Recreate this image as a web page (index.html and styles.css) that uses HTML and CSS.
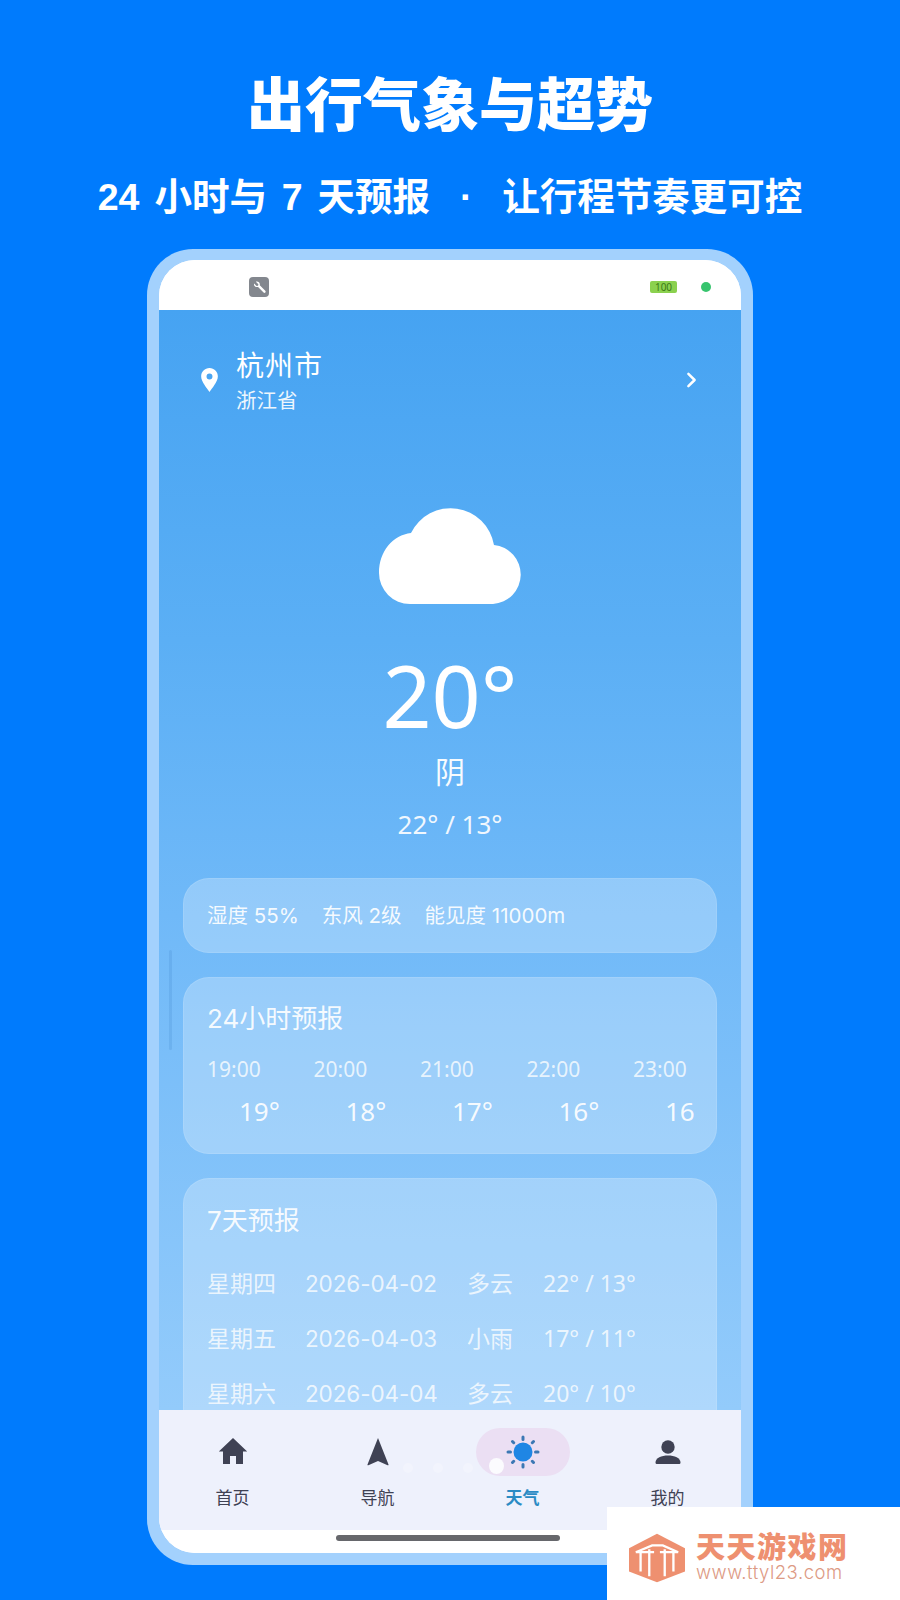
FILE: index.html
```html
<!DOCTYPE html>
<html lang="zh-CN">
<head>
<meta charset="utf-8">
<title>出行气象与超势</title>
<link rel="stylesheet" href="styles.css">
</head>
<body>
<main class="page">
  <h1 class="headline">出行气象与超势</h1>
  <p class="subline">24 小时与 7 天预报  ·  让行程节奏更可控</p>
  <section class="phone">
    <div class="screen">
      <header class="status">
        <span class="tool"><svg viewBox="0 0 20 20" width="17" height="17"><path d="M3.600 5.200 6.600 8.200l1.700-.4.400-1.700-3-3c2.600-.8 5 1.100 4.700 3.700l-.1.600 6.500 6.500c.6.600.6 1.400 0 2-.6.600-1.400.6-2 0L8.300 9.400l-.7.100C5 9.800 2.900 7.700 3.600 5.200z" fill="#fff"/></svg></span>
        <span class="status-right"><span class="battery">100</span><span class="live-dot"></span></span>
      </header>
      <div class="content">
        <div class="location">
          <svg class="pin" viewBox="0 0 20 28" width="19" height="26"><path fill-rule="evenodd" d="M10 1C5 1 1 5 1 10c0 6 6.500 13 9 17 2.500-4 9-11 9-17 0-5-4-9-9-9zm0 6a3.200 3.200 0 1 1 0 6.400A3.200 3.200 0 0 1 10 7z" fill="#fff"/></svg>
          <div class="place"><div class="city">杭州市</div><div class="province">浙江省</div></div>
          <svg class="chevron" viewBox="0 0 12 18" width="11" height="16"><path d="M2.500 2l7 7-7 7" fill="none" stroke="#fff" stroke-width="2.800" stroke-linecap="round" stroke-linejoin="round"/></svg>
        </div>
        <div class="hero">
          <svg class="cloud" viewBox="0 0 143 96" width="143" height="96"><path d="M31 96A31 31 0 0 1 0 65C0 43 14 27 32 25A44 44 0 0 1 115 37 29.600 29.600 0 0 1 114 96z" fill="#fff"/></svg>
          <div class="temp">20°</div>
          <div class="cond">阴</div>
          <div class="range">22° / 13°</div>
        </div>
        <div class="card card-meta"><span>湿度 55%</span><span>东风 2级</span><span>能见度 11000m</span></div>
        <div class="card card-hours">
          <div class="card-title">24小时预报</div>
          <div class="hours">
            <div class="hour"><span class="h-time">19:00</span><span class="h-temp">19°</span></div>
            <div class="hour"><span class="h-time">20:00</span><span class="h-temp">18°</span></div>
            <div class="hour"><span class="h-time">21:00</span><span class="h-temp">17°</span></div>
            <div class="hour"><span class="h-time">22:00</span><span class="h-temp">16°</span></div>
            <div class="hour"><span class="h-time">23:00</span><span class="h-temp">16</span></div>
          </div>
        </div>
        <div class="card card-days">
          <div class="card-title">7天预报</div>
          <div class="day"><span class="d-week">星期四</span><span class="d-date">2026-04-02</span><span class="d-cond">多云</span><span>22° / 13°</span></div>
          <div class="day"><span class="d-week">星期五</span><span class="d-date">2026-04-03</span><span class="d-cond">小雨</span><span>17° / 11°</span></div>
          <div class="day"><span class="d-week">星期六</span><span class="d-date">2026-04-04</span><span class="d-cond">多云</span><span>20° / 10°</span></div>
        </div>
        <span class="scroll-hint"></span>
      </div>
      <nav class="tabs">
        <div class="tab">
          <span class="tab-icon"><svg viewBox="0 0 30 30" width="30" height="30"><path d="M15 1 .8 14.500H5V27h7v-8h6v8h7V14.500h4.200z" fill="#3f4254"/></svg></span>
          <span class="tab-label">首页</span>
        </div>
        <div class="tab">
          <span class="tab-icon"><svg viewBox="0 0 24 30" width="24" height="30"><path d="M12 1 22.500 27.500c.2.700-.3 1-.9.800L12 24 2.400 28.300c-.6.200-1.100-.1-.9-.8z" fill="#3f4254"/></svg></span>
          <span class="tab-label">导航</span>
        </div>
        <div class="tab tab-on">
          <span class="tab-icon"><span class="pill"></span><svg class="sun" viewBox="0 0 40 40" width="40" height="40"><circle cx="20" cy="20" r="9.500" fill="#1f86e4"/><g stroke="#3c78b4" stroke-width="3" stroke-linecap="round"><path d="M20 5v2.500M20 32.500V35M5 20h2.500M32.500 20H35M9.500 9.500l1.200 1.200M29.300 29.300l1.200 1.200M9.500 30.500l1.200-1.200M29.300 10.700l1.200-1.200"/></g></svg><span class="pill-dot"></span></span>
          <span class="tab-label">天气</span>
        </div>
        <div class="tab">
          <span class="tab-icon"><svg viewBox="0 0 30 30" width="30" height="30"><circle cx="15" cy="10" r="6.700" fill="#3f4254"/><path d="M2.500 25.500c0-4.500 6-7 12.500-7s12.500 2.500 12.500 7c0 1-.7 1.500-1.500 1.500H4c-.8 0-1.500-.5-1.500-1.500z" fill="#3f4254"/></svg></span>
          <span class="tab-label">我的</span>
        </div>
        <span class="ghost-dots"><i></i><i></i><i></i></span>
      </nav>
      <div class="home-zone"><span class="home-bar"></span></div>
    </div>
  </section>
</main>
<aside class="mark">
  <svg class="mark-logo" viewBox="0 0 58 50" width="56" height="50"><path d="M29 0 58 15v24L29 50 0 39V15z" fill="#ee9070"/><path d="M7 19 24 12h11l16 7M12 19v20M21 16v28M37 16v28M46 19v20M7 19h19M32 19h19" fill="none" stroke="#fff" stroke-width="2.400"/></svg>
  <div class="mark-text"><div class="mark-cn">天天游戏网</div><div class="mark-url">www.ttyl23.com</div></div>
</aside>
</body>
</html>
```
FILE: styles.css
```css
* { box-sizing: border-box; }
html, body { margin: 0; padding: 0; }
body {
  width: 900px;
  height: 1600px;
  overflow: hidden;
  position: relative;
  background: #007bfd;
  font-family: "Noto Sans", "Noto Sans CJK SC", sans-serif;
}
.page { display: flex; flex-direction: column; align-items: center; padding-top: 59px; }
.headline {
  margin: 0;
  height: 84px;
  line-height: 84px;
  font-size: 58px;
  font-weight: 900;
  color: #fff;
  font-family: "Noto Sans CJK SC", sans-serif;
}
.subline {
  margin: 27px 0 0;
  height: 54px;
  line-height: 54px;
  font-size: 37.500px;
  font-weight: 700;
  color: #fff;
  font-family: "Liberation Sans", "Noto Sans CJK SC", sans-serif;
  word-spacing: 4.500px;
  white-space: pre;
}
.phone {
  margin-top: 25px;
  width: 606px;
  height: 1316px;
  padding: 11px 12px;
  border-radius: 46px;
  background: #a3d1fd;
}
.screen {
  height: 1293px;
  border-radius: 36px;
  overflow: hidden;
  display: flex;
  flex-direction: column;
  background: #fff;
}
.status {
  flex: none;
  height: 50px;
  padding: 17px 30px 0 90px;
  display: flex;
  justify-content: space-between;
  align-items: flex-start;
  background: #fff;
}
.tool {
  width: 20px;
  height: 20px;
  border-radius: 4px;
  background: #83878e;
  display: flex;
  align-items: center;
  justify-content: center;
}
.status-right { display: flex; align-items: center; gap: 24px; height: 20px; }
.battery {
  width: 27px;
  height: 12px;
  border-radius: 2px;
  background: #8bd14f;
  color: #3c7a16;
  font-size: 10px;
  line-height: 12px;
  text-align: center;
}
.live-dot { width: 10px; height: 10px; border-radius: 50%; background: #37c46e; }
.content {
  flex: none;
  height: 1100px;
  position: relative;
  overflow: hidden;
  padding: 0 24px;
  background: linear-gradient(180deg, #46a3f2 0%, #5baff5 30%, #70b9f8 55%, #93cbfb 100%);
  color: #fff;
}
.location { display: flex; align-items: center; height: 64px; margin-top: 38px; padding: 0 20px 0 17px; }
.pin { flex: none; margin-right: 17px; }
.place { flex: 1; }
.city { font-size: 28px; line-height: 36px; letter-spacing: 1px; }
.province { font-size: 20.500px; line-height: 28px; margin-top: 3px; opacity: .9; }
.hero { display: flex; flex-direction: column; align-items: center; margin-top: 96px; height: 370px; }
.cloud { flex: none; }
.temp { font-size: 86px; line-height: 90px; margin-top: 46px; font-weight: 400; }
.cond { font-size: 30px; line-height: 40px; margin-top: 12px; opacity: .95; }
.range { font-size: 26px; line-height: 36px; margin-top: 14px; opacity: .9; }
.card {
  border: 1px solid rgba(255,255,255,.1);
  border-radius: 26px;
  background: rgba(255,255,255,.26);
  color: rgba(255,255,255,.92);
  padding: 0 23px;
}
.card-meta {
  display: flex;
  align-items: center;
  gap: 23px;
  height: 75px;
  margin-top: 0;
  padding-bottom: 3px;
  font-size: 20.500px;
  font-family: "Inter", "Noto Sans CJK SC", sans-serif;
}
.card-hours { height: 177px; margin-top: 24px; padding-top: 22px; }
.card-title { font-size: 26px; line-height: 38px; font-family: "Inter", "Noto Sans CJK SC", sans-serif; }
.hours { display: flex; gap: 52.500px; margin-top: 16px; white-space: nowrap; overflow: hidden; margin-right: -2px; }
.hour { flex: none; width: 54px; display: flex; flex-direction: column; }
.h-time { font-size: 21px; line-height: 30px; opacity: .85; }
.h-temp { font-size: 26px; line-height: 36px; margin-top: 9px; margin-left: 32px; }
.card-days { height: 360px; margin-top: 24px; padding-top: 23px; font-size: 23px; }
.day { display: flex; height: 55px; line-height: 55px; align-items: baseline; opacity: .85; }
.card-title + .day { margin-top: 16px; }
.d-week { width: 98px; }
.d-date { width: 162px; font-family: "Inter", "Noto Sans CJK SC", sans-serif; font-size: 22.500px; font-weight: 400; letter-spacing: -.1px; }
.d-cond { width: 76px; }
.scroll-hint {
  position: absolute;
  left: 10px;
  top: 640px;
  width: 3px;
  height: 100px;
  border-radius: 2px;
  background: rgba(60,130,200,.2);
}
.tabs {
  flex: none;
  position: relative;
  height: 120px;
  display: grid;
  grid-template-columns: repeat(4, 145px);
  justify-content: center;
  background: #eef1fc;
}
.tab { display: flex; flex-direction: column; align-items: center; padding-top: 18px; }
.tab-icon {
  position: relative;
  width: 94px;
  height: 48px;
  display: flex;
  align-items: center;
  justify-content: center;
}
.pill { position: absolute; inset: 0; border-radius: 24px; background: #ebdff3; }
.sun { position: relative; }
.pill-dot { position: absolute; left: 13px; top: 30px; width: 15px; height: 16px; border-radius: 50%; background: #fbfbfe; }
.tab-label { margin-top: 9px; font-size: 17px; line-height: 24px; font-weight: 400; color: #3f4254; font-family: "Noto Sans CJK SC", sans-serif; }
.tab-on .tab-label { color: #2a8bc4; font-weight: 700; }
.ghost-dots { position: absolute; left: 244px; top: 53px; display: flex; gap: 20px; }
.ghost-dots i { width: 10px; height: 10px; border-radius: 50%; background: rgba(255,255,255,.25); }
.home-zone { flex: 1; display: flex; justify-content: center; padding-top: 5px; padding-right: 4px; background: #fff; }
.home-bar { width: 224px; height: 6px; border-radius: 3px; background: #66676c; }
.mark {
  position: absolute;
  left: 607px;
  top: 1507px;
  width: 293px;
  height: 93px;
  background: #fff;
  display: flex;
  align-items: center;
  gap: 11px;
  padding: 0 0 0 22px;
}
.mark-logo { flex: none; margin-top: 8px; }
.mark-cn { font-size: 29px; line-height: 34px; margin-top: 2px; font-weight: 900; color: #ee9070; font-family: "Noto Sans CJK SC", sans-serif; letter-spacing: 1.500px; }
.mark-url { font-size: 18.500px; line-height: 20px; color: #dd9a84; letter-spacing: .5px; font-family: "Inter", sans-serif; font-weight: 300; white-space: nowrap; }
```
